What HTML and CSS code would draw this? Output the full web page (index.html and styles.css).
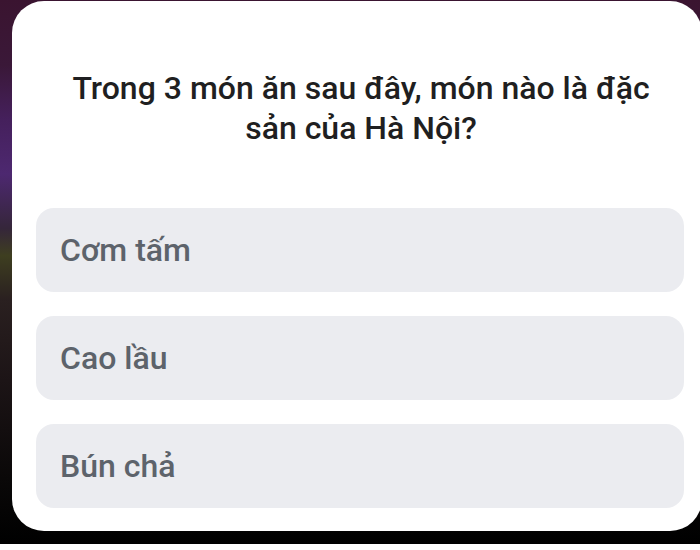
FILE: index.html
```html
<!DOCTYPE html>
<html lang="vi">
<head>
<meta charset="utf-8">
<link rel="stylesheet" href="styles.css">
</head>
<body>
<div class="screen">
  <div class="card">
    <h1 class="question">Trong 3 món ăn sau đây, món nào là đặc sản của Hà Nội?</h1>
    <div class="options">
      <div class="option">Cơm tấm</div>
      <div class="option">Cao lầu</div>
      <div class="option">Bún chả</div>
    </div>
  </div>
</div>
<div class="strip"></div>
</body>
</html>
```
FILE: styles.css
```css
html, body {
  margin: 0;
  padding: 0;
  background: #ffffff;
}
.screen {
  width: 700px;
  height: 544px;
  box-sizing: border-box;
  padding: 1px 0 13px 12px;
  background: linear-gradient(180deg, #3a1430 0%, #3a1838 12%, #45205c 22%, #4d2870 32%, #35263a 42%, #3e3e20 47%, #2a2020 55%, #1c1416 70%, #0a0808 88%, #000000 100%);
  overflow: hidden;
}
.card {
  width: 690px;
  height: 530px;
  background: #ffffff;
  border-radius: 32px;
  box-sizing: border-box;
  padding: 67px 16px 0 24px;
  font-family: Roboto, "Noto Sans", sans-serif;
}
.question {
  margin: 0;
  height: 140px;
  padding: 0 18px;
  text-align: center;
  font-size: 32px;
  line-height: 40px;
  font-weight: 500;
  color: #1f1f21;
}
.options {
  display: flex;
  flex-direction: column;
  gap: 24px;
}
.option {
  height: 84px;
  border-radius: 18px;
  background: #ebecf0;
  display: flex;
  align-items: center;
  padding: 0 24px;
  font-size: 32px;
  color: #5d636b;
  font-weight: 500;
  width: 648px;
  box-sizing: border-box;
}
.strip {
  height: 6px;
  background: #ffffff;
}
```
